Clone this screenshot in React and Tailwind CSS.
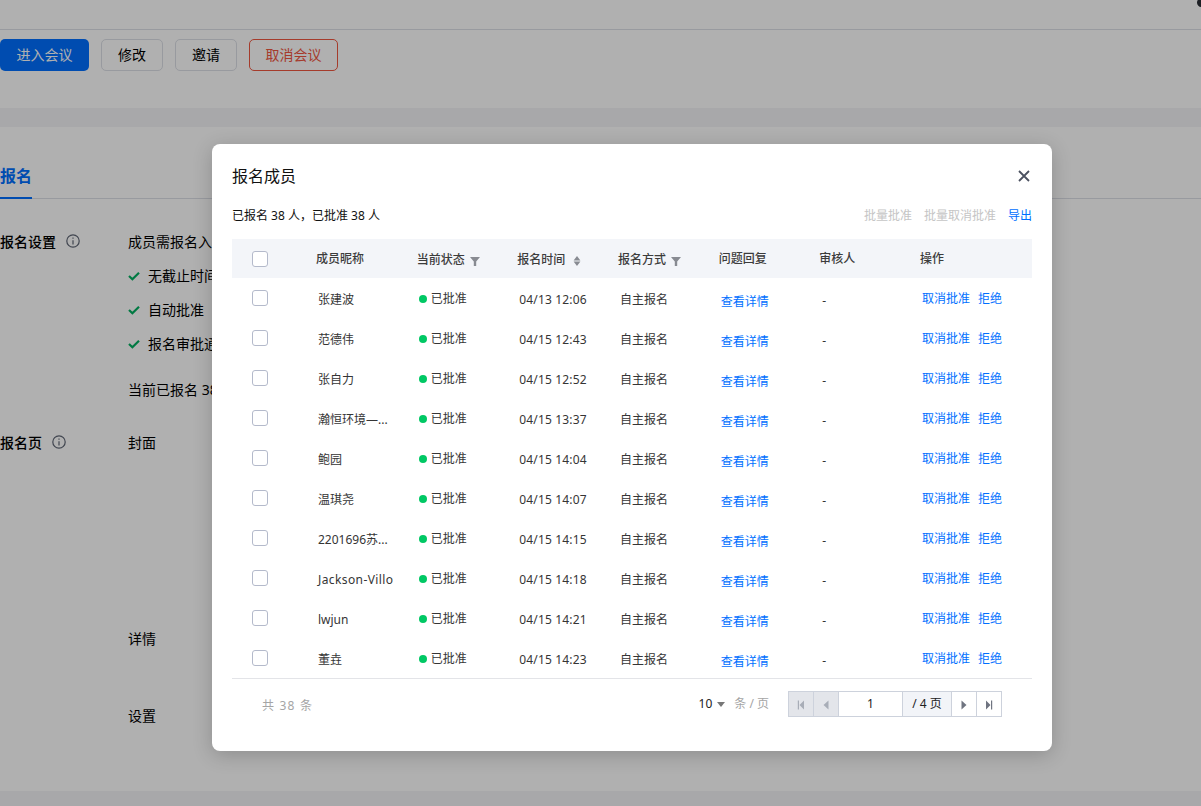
import React from "react";

const FONT = '"Noto Sans","Noto Sans CJK SC",sans-serif';
const rows = [
  ["张建波", "04/13 12:06"],
  ["范德伟", "04/15 12:43"],
  ["张自力", "04/15 12:52"],
  ["瀚恒环境—...", "04/15 13:37"],
  ["鲍园", "04/15 14:04"],
  ["温琪尧", "04/15 14:07"],
  ["2201696苏...", "04/15 14:15"],
  ["Jackson-Villo", "04/15 14:18"],
  ["lwjun", "04/15 14:21"],
  ["董垚", "04/15 14:23"],
];

const Info = ({ className }) => (
  <svg viewBox="0 0 14 14" className={className} fill="none" stroke="#5f6675" strokeWidth="1.2">
    <circle cx="7" cy="7" r="6.2" />
    <path d="M7 6.2v4.2" />
    <path d="M7 3.4v1.4" />
  </svg>
);
const Check = () => (
  <svg viewBox="0 0 12 12" className="w-3 h-3" fill="none" stroke="#00b060" strokeWidth="2.2">
    <path d="M1 6l3.4 3.3L11 2.8" />
  </svg>
);
const Funnel = () => (
  <svg viewBox="0 0 10 10" className="w-[10px] h-[10px] mt-[3px]" fill="#888b92">
    <path d="M0 1h10L6.2 5.4V10H3.8V5.4z" />
  </svg>
);
const Sort = () => (
  <svg viewBox="0 0 8 10" className="w-2 h-[10px] mt-[2px]" fill="#888b92">
    <path d="M4 0l3.4 4.4H.6zM4 10L.6 5.6h6.8z" />
  </svg>
);
const Box = () => <span className="block w-4 h-4 rounded-[3px] border border-[#b4bacb] bg-white" />;

const PageBtn = ({ dir, bar, disabled }) => (
  <div className={`w-[25px] flex items-center justify-center border-r border-[#cdd2dc] last:border-r-0 last:w-[24px] ${disabled ? "bg-[#e3e5ea]" : "bg-white"}`}>
    <svg viewBox="0 0 8 10" className="w-2 h-[10px] mt-[2px]" fill={disabled ? "#a8adb7" : "#6f7480"}>
      {dir === "l" ? <path d={bar ? "M7 0.5v9L2.5 5zM0.8 0.5h1.2v9H.8z" : "M6.5 0.5v9L1.5 5z"} /> : <path d={bar ? "M1 0.5v9L5.5 5zM6 0.5h1.2v9H6z" : "M1.5 0.5v9L6.5 5z"} />}
    </svg>
  </div>
);

export default function App() {
  return (
    <div className="relative w-[1201px] h-[806px] overflow-hidden bg-white text-black" style={{ fontFamily: FONT }}>
      {/* page */}
      <span className="absolute -right-[5px] -top-[2px] w-[9px] h-[9px] rounded-full bg-[#2a2d35]" />
      <div className="h-[30px] border-b border-[#dcdfe6]" />
      <div className="h-[78px] pt-[9px] flex items-start gap-3 text-sm">
        <button className="w-[89px] h-8 rounded-[5px] bg-[#006fff] text-white">进入会议</button>
        <button className="w-[62px] h-8 rounded-[5px] border border-[#dcdfe6]">修改</button>
        <button className="w-[62px] h-8 rounded-[5px] border border-[#dcdfe6]">邀请</button>
        <button className="w-[89px] h-8 rounded-[5px] border border-[#f0563f] text-[#f0563f]">取消会议</button>
      </div>
      <div className="h-[19px] bg-[#f3f4f6]" />
      <div className="h-[72px] border-b border-[#dcdfe6] flex items-end">
        <div className="w-8 h-[33px] border-b-2 border-[#006fff] -mb-px text-[#006fff] text-base font-bold leading-5 whitespace-nowrap">报名</div>
      </div>
      <div className="h-[592px] relative text-sm">
        <div className="flex pt-[33px]">
          <div className="w-[128px] flex items-center gap-[10px] font-medium h-5">
            <span>报名设置</span>
            <Info className="w-[14px] h-[14px] -mt-[2px]" />
          </div>
          <div className="flex flex-col">
            <div className="h-5 leading-5">成员需报名入会</div>
            <div className="h-5 leading-5 mt-[14px] flex items-center gap-2"><Check />无截止时间</div>
            <div className="h-5 leading-5 mt-[14px] flex items-center gap-2"><Check />自动批准</div>
            <div className="h-5 leading-5 mt-[14px] flex items-center gap-2"><Check />报名审批通过后发送通知</div>
            <div className="h-5 leading-5 mt-[26px]">当前已报名 38 人</div>
          </div>
        </div>
        <div className="flex mt-[33px]">
          <div className="w-[128px] flex items-center gap-[10px] font-medium h-5">
            <span>报名页</span>
            <Info className="w-[14px] h-[14px] -mt-[2px]" />
          </div>
          <div className="flex flex-col">
            <div className="h-5 leading-5">封面</div>
            <div className="h-5 leading-5 mt-[176px]">详情</div>
            <div className="h-5 leading-5 mt-[57px]">设置</div>
          </div>
        </div>
      </div>
      <div className="h-[15px] bg-[#f3f4f6]" />

      {/* overlay */}
      <div className="absolute inset-0 bg-black/[0.31]">
        <div className="absolute left-[212px] top-[144px] w-[840px] h-[607px] rounded-lg bg-white px-5 shadow-[0_4px_20px_rgba(0,0,0,0.2)]">
          <div className="flex items-center justify-between h-[64px] pb-[1px]">
            <span className="text-base text-[#111] leading-6">报名成员</span>
            <svg viewBox="0 0 12 12" className="w-3 h-3 mr-[2px]" fill="none" stroke="#4b5160" strokeWidth="1.8">
              <path d="M1 1l10 10M11 1L1 11" />
            </svg>
          </div>
          <div className="flex items-center justify-between h-[31px] pb-[16px] text-xs">
            <span className="text-[#111]">已报名 38 人，已批准 38 人</span>
            <div className="flex gap-3">
              <span className="text-[#c5c5c5]">批量批准</span>
              <span className="text-[#c5c5c5]">批量取消批准</span>
              <span className="text-[#006fff]">导出</span>
            </div>
          </div>
          <div className="text-xs text-[#353535]">
            <div className="h-[39px] bg-[#f3f5f9] grid grid-cols-[84px_repeat(6,100.67px)_1fr] items-center font-medium text-[#3c3c3c]">
              <div className="pl-5"><Box /></div>
              <div>成员昵称</div>
              <div className="flex items-center gap-[5px] pt-[2px]">当前状态<Funnel /></div>
              <div className="flex items-center gap-2 pt-[2px]">报名时间<Sort /></div>
              <div className="flex items-center gap-[5px] pt-[2px]">报名方式<Funnel /></div>
              <div>问题回复</div>
              <div>审核人</div>
              <div>操作</div>
            </div>
            {rows.map(([name, time]) => (
              <div key={time} className="h-10 grid grid-cols-[84px_repeat(6,100.67px)_1fr] items-center">
                <div className="pl-5"><Box /></div>
                <div className={`pl-[2px] pt-1 ${name === "Jackson-Villo" ? "tracking-[0.4px]" : ""}`}>{name}</div>
                <div className="flex items-center gap-[4px] pl-[2px] pt-[2px]">
                  <span className="w-2 h-2 rounded-full bg-[#00c864]" />已批准
                </div>
                <div className="pl-[2px] pt-1 tracking-[0.15px]">{time}</div>
                <div className="pl-[2px] pt-1">自主报名</div>
                <div className="pl-[2px] pt-[7px] text-[#006fff]">查看详情</div>
                <div className="pl-[3px] pt-[6px]">-</div>
                <div className="pl-[2px] pt-[2px] flex gap-2 text-[#006fff] whitespace-nowrap">
                  <span>取消批准</span><span>拒绝</span>
                </div>
              </div>
            ))}
          </div>
          <div className="border-t border-[#e3e4e8] h-[70px] flex items-start justify-between pt-3 text-xs">
            <span className="pl-[30px] mt-[7px] text-[#a5a5a5] tracking-[1.2px]">共 38 条</span>
            <div className="flex items-center mr-[30px]">
              <span className="text-[#222] pl-[1px]">10</span>
              <svg viewBox="0 0 8 5" className="w-2 h-[5px] ml-[5px]" fill="#777"><path d="M0 0h8L4 5z" /></svg>
              <span className="ml-[9px] text-[#a5a5a5]">条 / 页</span>
              <div className="ml-[19px] w-[214px] h-[26px] border border-[#cdd2dc] flex text-[#222]">
                <PageBtn dir="l" bar disabled />
                <PageBtn dir="l" disabled />
                <div className="w-[64px] flex items-center justify-center border-r border-[#cdd2dc]">1</div>
                <div className="w-[49px] flex items-center justify-center bg-[#f2f4f8] border-r border-[#cdd2dc]">/ 4 页</div>
                <PageBtn dir="r" />
                <PageBtn dir="r" bar />
              </div>
            </div>
          </div>
        </div>
      </div>
    </div>
  );
}
